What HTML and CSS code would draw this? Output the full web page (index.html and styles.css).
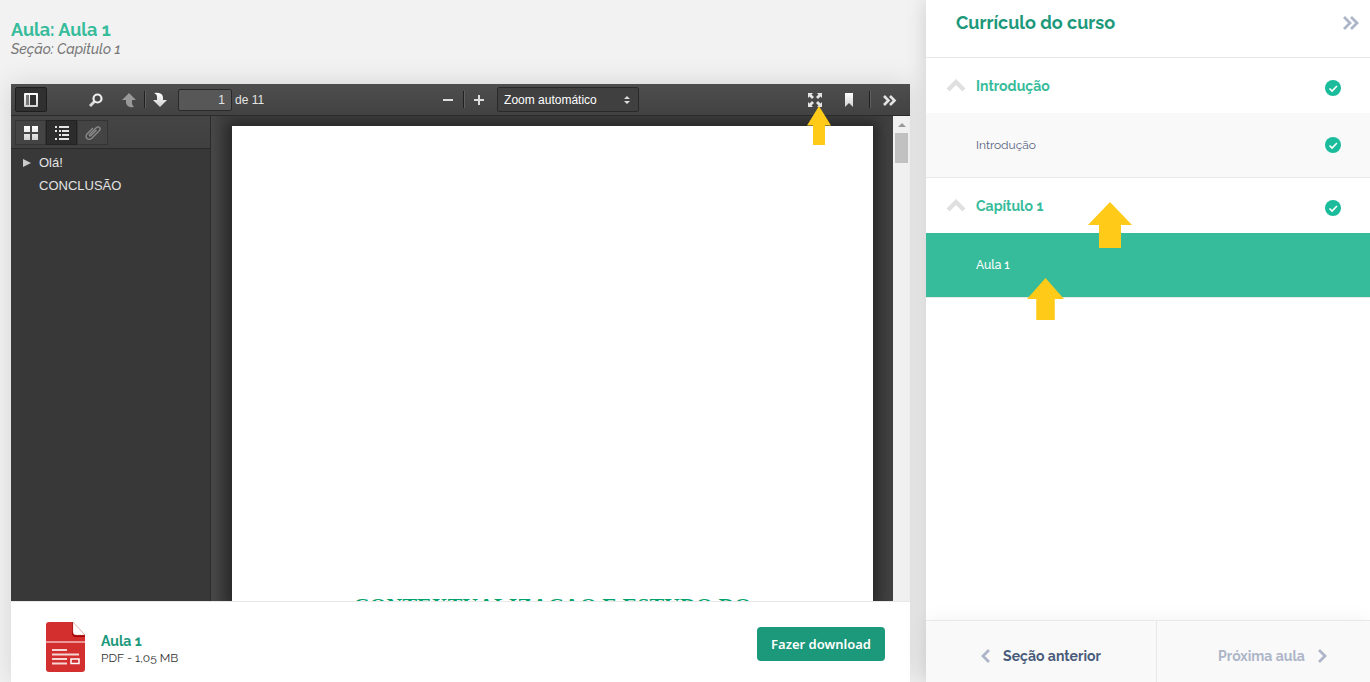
FILE: index.html
```html
<!DOCTYPE html>
<html lang="pt-BR">
<head>
<meta charset="utf-8">
<meta name="viewport" content="width=device-width, initial-scale=1">
<title>Aula 1</title>
<link rel="stylesheet" href="styles.css">
</head>
<body>
<svg class="defs" aria-hidden="true">
  <defs>
    <linearGradient id="metal" x1="0" y1="0" x2="0" y2="1"><stop offset="0" stop-color="#fff"/><stop offset="1" stop-color="#d0d0d0"/></linearGradient>
    <symbol id="check" viewBox="0 0 16 16"><circle cx="8" cy="8" r="8" fill="#1abc9c"/><path d="M4.500 8.500l2.600 2.500 4.800-5" fill="none" stroke="#fff" stroke-width="1.600"/></symbol>
    <symbol id="caret" viewBox="0 0 20 13"><path d="M2 11l8-8 8 8" fill="none" stroke="#e0e0e0" stroke-width="4.400"/></symbol>
    <symbol id="pointer" viewBox="0 0 44 46" preserveAspectRatio="none"><path d="M22 0l22 23H33v23H11V23H0z" fill="#ffca18"/></symbol>
  </defs>
</svg>
<div class="layout">
  <main class="lesson">
    <header class="lesson-head">
      <h1>Aula: Aula 1</h1>
      <p>Seção: Capitulo 1</p>
    </header>
    <section class="card">
      <div class="viewer">
        <div class="toolbar">
          <div class="group">
            <button class="tool pressed" aria-label="Painel lateral"><svg width="16" height="16"><path fill="url(#metal)" fill-rule="evenodd" d="M2 1h12q1 0 1 1v12q0 1-1 1H2q-1 0-1-1V2q0-1 1-1zm1 2v10h3V3zm4 0v10h6V3z"/><path d="M3 3h3v10H3z" fill="#777"/></svg></button>
            <button class="tool search" aria-label="Procurar"><svg width="16" height="16"><path d="M6.500 9.500L2 14" stroke="#ddd" stroke-width="2.800"/><circle cx="9.500" cy="6.500" r="4" fill="none" stroke="#eee" stroke-width="2.200"/></svg></button>
            <button class="tool" aria-label="Página anterior"><svg width="16" height="16"><path d="M8 1l7 7h-4v3q0 2 2 4-7 1-8-4V8H1z" fill="#999"/></svg></button>
            <span class="sep"></span>
            <button class="tool" aria-label="Próxima página"><svg width="16" height="16"><path d="M8 15l7-7h-4V5q-1-5-9-4 3 1 3 4v3H1z" fill="url(#metal)"/></svg></button>
            <input class="page-input" type="text" value="1" aria-label="Página">
            <span class="pages">de 11</span>
          </div>
          <div class="group zoom">
            <button class="tool" aria-label="Reduzir"><svg width="16" height="16"><path d="M3 7h10v2H3z" fill="#ddd"/></svg></button>
            <span class="sep"></span>
            <button class="tool" aria-label="Ampliar"><svg width="16" height="16"><path d="M3 7h4V3h2v4h4v2H9v4H7V9H3z" fill="#ddd"/></svg></button>
            <span class="select-box">
              <select aria-label="Zoom"><option>Zoom automático</option></select>
              <svg class="updown" width="6" height="8"><path d="M3 0l3 3H0zM0 5h6L3 8z" fill="#ddd"/></svg>
            </span>
          </div>
          <div class="group">
            <button class="tool fullscreen" aria-label="Tela cheia"><svg width="16" height="16"><path fill="#e4e4e4" d="M1 1h5L4.500 2.500 7 5 5 7 2.500 4.500 1 6zM15 1v5l-1.500-1.500L11 7 9 5l2.500-2.500L10 1zM1 15v-5l1.500 1.500L5 9l2 2-2.500 2.500L6 15zM15 15h-5l1.500-1.500L9 11l2-2 2.500 2.500L15 10z"/></svg>
              <svg class="pointer pointer-tool" aria-hidden="true"><use href="#pointer"/></svg></button>
            <button class="tool" aria-label="Marcador"><svg width="16" height="16"><path d="M4 1h8v14l-4-4-4 4z" fill="url(#metal)"/></svg></button>
            <span class="sep wide"></span>
            <button class="tool" aria-label="Ferramentas"><svg width="16" height="16"><path d="M2 4l4.500 4.500L2 13M8 4l4.500 4.500L8 13" fill="none" stroke="#e4e4e4" stroke-width="2.600"/></svg></button>
          </div>
        </div>
        <aside class="outline">
          <div class="tabs">
            <button class="tab" aria-label="Miniaturas"><svg width="16" height="16"><path fill="url(#metal)" d="M1 1h6v6H1zM9 1h6v6H9zM1 9h6v6H1zM9 9h6v6H9z"/></svg></button>
            <button class="tab on" aria-label="Estrutura"><svg width="16" height="16"><path fill="#e4e4e4" d="M1 1h2v2H1zM5 1h10v2H5zM1 5h2v2H1zM5 5h2v2H5zM8 5h7v2H8zM5 9h2v2H5zM8 9h7v2H8zM1 13h2v2H1zM5 13h10v2H5z"/></svg></button>
            <button class="tab" aria-label="Anexos"><svg width="16" height="16"><path d="M11.500 5L6 10.500q-1 1-1.500 0t.5-1.500l6-6q2-2 3.500-.5T14 6l-7 7q-3 2.500-5 .5t0-4.500l6-6" fill="none" stroke="#8c8c8c" stroke-width="1.300"/></svg></button>
          </div>
          <ul class="tree">
            <li><svg width="8" height="10"><path d="M0 1l8 4-8 4z" fill="#ccc"/></svg>Olá!</li>
            <li><span class="leaf"></span>CONCLUSÃO</li>
          </ul>
        </aside>
        <div class="pages-area"><div class="paper"><h2>CONTEXTUALIZAÇAO E ESTUDO DO</h2></div></div>
        <div class="scrollbar"><svg width="17" height="17"><path d="M5 11l4-4 4 4z" fill="#999"/></svg><div class="thumb"></div></div>
      </div>
      <footer class="download">
        <svg width="40" height="50" viewBox="0 0 40 50"><path d="M3 0h24l12 13v34q0 3-3 3H3q-3 0-3-3V3q0-3 3-3z" fill="#d32f2f"/><path d="M26 0v11q0 4 4 4h9v-2z" fill="#a80000"/><path d="M27 0l12 13h-9q-3 0-3-3z" fill="#fff" stroke="#c99" stroke-width=".4"/><path d="M0 20h39" stroke="#fff"/><path d="M6 28h15M6 32.500h27M6 37h15M6 41.500h15" stroke="#f6d5d5" stroke-width="1.800"/><path d="M25 37h8v4.500h-8z" fill="none" stroke="#fff" stroke-width="1.500"/></svg>
        <div class="file"><strong>Aula 1</strong><span>PDF - 1,05 MB</span></div>
        <button class="download-btn">Fazer download</button>
      </footer>
    </section>
  </main>
  <aside class="course">
    <header class="course-head"><h2>Currículo do curso</h2>
      <button aria-label="Recolher"><svg width="18" height="16"><path d="M2 2l6 6-6 6M9 2l6 6-6 6" fill="none" stroke="#adb5c8" stroke-width="2.800"/></svg></button></header>
    <nav class="chapters">
      <button class="chapter"><svg width="20" height="13"><use href="#caret"/></svg><span>Introdução</span><svg class="done" width="16" height="16"><use href="#check"/></svg></button>
      <a class="item" href="#introducao"><span>Introdução</span><svg width="16" height="16"><use href="#check"/></svg></a>
      <button class="chapter"><svg width="20" height="13"><use href="#caret"/></svg><span>Capítulo 1</span><svg class="done" width="16" height="16"><use href="#check"/></svg>
        <svg class="pointer pointer-chapter" aria-hidden="true"><use href="#pointer"/></svg></button>
      <a class="item current" href="#aula-1"><span>Aula 1</span>
        <svg class="pointer pointer-item" aria-hidden="true"><use href="#pointer"/></svg></a>
    </nav>
    <footer class="pager">
      <button><svg width="10" height="14"><path d="M8 1L2 7l6 6" fill="none" stroke="#adb5c8" stroke-width="2.800"/></svg>Seção anterior</button>
      <button disabled>Próxima aula<svg width="10" height="14"><path d="M2 1l6 6-6 6" fill="none" stroke="#adb5c8" stroke-width="2.800"/></svg></button>
    </footer>
  </aside>
</div>
</body>
</html>
```
FILE: styles.css
```css
* { box-sizing: border-box; }
body { margin: 0; font-family: Raleway, Lato, sans-serif; background: #f2f2f2; color: #333; }
h1, h2, p, ul { margin: 0; padding: 0; }
button, input, select { font: inherit; color: inherit; margin: 0; }
button { padding: 0; border: 0; background: none; cursor: pointer; }
svg { display: block; flex: none; }
.defs { position: absolute; width: 0; height: 0; }

.layout { display: grid; grid-template-columns: minmax(0, 1fr) 444px; min-height: 100vh; }
.lesson { display: flex; flex-direction: column; padding: 0 16px 0 11px; }
.lesson-head { padding: 20px 0 26px; }
.lesson-head h1 { font-size: 18px; line-height: 20px; font-weight: 700; color: #37bc9b; }
.lesson-head p { font-size: 14px; line-height: 18px; font-style: italic; font-weight: 500; color: #777; }

.card { flex: 1; display: flex; flex-direction: column; background: #fff; box-shadow: 0 0 26px rgba(0, 0, 0, .12); }
.viewer {
  flex: 1; display: grid; grid-template-columns: 200px minmax(0, 1fr) 17px; grid-template-rows: 32px minmax(0, 1fr);
  background: #404040; color: #e4e4e4; font-family: "Liberation Sans", Arial, sans-serif;
}
.toolbar {
  grid-column: 1 / -1; display: flex; justify-content: space-between; align-items: center; padding: 0 4px;
  background: linear-gradient(#4e4e4e, #424242); border-bottom: 1px solid #2a2a2a; font-size: 12px;
}
.group { display: flex; align-items: center; }
.zoom { margin-left: 8px; }
.tool { position: relative; width: 32px; height: 25px; display: grid; place-items: center; }
.pressed { background: #303030; border: 1px solid #1e1e1e; border-radius: 2px; }
.search { margin: 0 1px 0 33px; }
.fullscreen { margin-right: 2px; }
.sep { width: 1px; height: 17px; margin: 0 -1px; background: #202020; box-shadow: 1px 0 #606060; }
.sep.wide { margin: 0 4px; }
.page-input { width: 54px; height: 22px; margin: 0 3px 0 2px; padding: 0 6px; text-align: right; background: #575757; border: 1px solid #292929; border-radius: 2px; }
.select-box { display: grid; align-items: center; margin-left: 2px; }
.select-box > * { grid-area: 1 / 1; }
.select-box select { width: 142px; height: 25px; padding: 0 6px; appearance: none; color: #fff; background: #404040; border: 1px solid #292929; border-radius: 2px; }
.updown { justify-self: end; margin-right: 9px; }

.outline { background: #383838; border-right: 1px solid #2a2a2a; font-size: 13px; }
.tabs { display: flex; padding: 4px; height: 33px; background: linear-gradient(#454545, #404040); border-bottom: 1px solid #2a2a2a; }
.tab { width: 31px; height: 25px; display: grid; place-items: center; background: #444; border: 1px solid #343434; }
.tab.on { background: #2c2c2c; border-color: #222; }
.tree { list-style: none; padding: 2px 12px; }
.tree li { display: flex; align-items: center; gap: 8px; height: 23px; }
.leaf { width: 8px; }

.pages-area { padding: 10px 20px 0 21px; overflow: hidden; display: flex; background: linear-gradient(90deg, #484848, #404040 12px); }
.paper { flex: 1; padding-top: 468px; text-align: center; background: #fff; box-shadow: 0 0 12px 5px #262626; height: 0; min-height: 100%; overflow: hidden; }
.paper h2 { font: bold 22px/24px "Liberation Serif", "Times New Roman", serif; color: #00a26b; white-space: nowrap; }
.scrollbar { background: #f0f0f0; }
.thumb { height: 30px; margin: 0 2px; background: #c1c1c1; }

.download { display: flex; align-items: center; min-height: 81px; padding: 10px 25px 0 35px; border-top: 1px solid #e8e8e8; }
.file { display: grid; margin: 0 auto 0 15px; padding-top: 6px; font-size: 12px; line-height: 17px; }
.file strong { font-size: 14px; color: #1c987a; }
.download-btn { height: 34px; padding: 0 14px; margin-bottom: 6px; border-radius: 4px; background: #1c987a; color: #fff; font-family: "Noto Sans", "Open Sans", sans-serif; font-size: 13px; font-weight: 600; }

.course { display: flex; flex-direction: column; background: #fff; box-shadow: 0 0 20px rgba(0, 0, 0, .15); }
.course-head { display: flex; justify-content: space-between; align-items: center; height: 58px; padding: 0 10px 11px 30px; border-bottom: 1px solid #e8e8e8; }
.course-head h2 { font-size: 18px; line-height: 24px; color: #1c987a; }
.chapters { flex: 1; }
.chapter { position: relative; display: flex; align-items: center; gap: 10px; width: 100%; height: 55px; padding: 0 29px 0 20px; text-align: left; font-size: 14px; font-weight: 700; color: #37bc9b; }
.chapter .done { margin: 5px 0 0 auto; }
.item { position: relative; display: flex; align-items: center; justify-content: space-between; height: 65px; padding: 0 29px 0 50px; font-size: 12px; text-decoration: none; color: #56637f; background: #f9f9f9; border-bottom: 1px solid #e8e8e8; }
.item.current { background: #37bc9b; color: #fff; font-weight: 500; }
.pager { display: grid; grid-template-columns: 231px minmax(0, 1fr); height: 62px; background: #f9f9f9; border-top: 1px solid #e8e8e8; box-shadow: 0 0 20px rgba(0, 0, 0, .06); }
.pager button { display: flex; align-items: center; justify-content: center; gap: 12px; padding-top: 8px; font-size: 14px; font-weight: 700; color: #495b7b; }
.pager button:first-child { border-right: 1px solid #e8e8e8; }
.pager button:disabled { color: #adb5c8; padding-left: 18px; }

/* Guide arrows laid over the interface */
.pointer { position: absolute; z-index: 2; pointer-events: none; }
.pointer-tool { width: 24px; height: 39px; left: 8px; top: 19px; }
.pointer-chapter { width: 44px; height: 46px; left: 162px; top: 24px; }
.pointer-item { width: 37px; height: 42px; left: 101px; top: 45px; }
```
